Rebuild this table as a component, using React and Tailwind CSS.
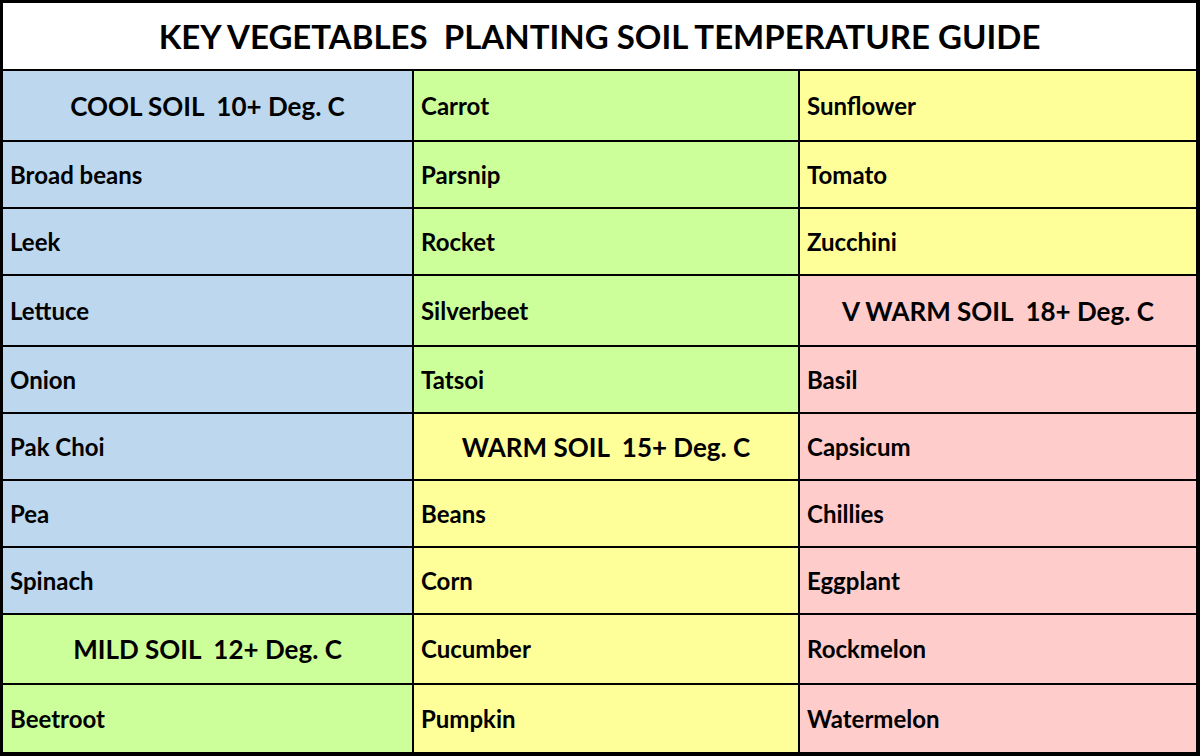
import React from 'react';

const BLUE = 'bg-[#bdd7ee]';
const GREEN = 'bg-[#ccff99]';
const YELLOW = 'bg-[#ffff99]';
const PINK = 'bg-[#ffcccc]';

// each column: [text, colour, isHeader]
const columns = [
  [
    ['COOL SOIL  10+ Deg. C', BLUE, true],
    ['Broad beans', BLUE],
    ['Leek', BLUE],
    ['Lettuce', BLUE],
    ['Onion', BLUE],
    ['Pak Choi', BLUE],
    ['Pea', BLUE],
    ['Spinach', BLUE],
    ['MILD SOIL  12+ Deg. C', GREEN, true],
    ['Beetroot', GREEN],
  ],
  [
    ['Carrot', GREEN],
    ['Parsnip', GREEN],
    ['Rocket', GREEN],
    ['Silverbeet', GREEN],
    ['Tatsoi', GREEN],
    ['WARM SOIL  15+ Deg. C', YELLOW, true],
    ['Beans', YELLOW],
    ['Corn', YELLOW],
    ['Cucumber', YELLOW],
    ['Pumpkin', YELLOW],
  ],
  [
    ['Sunflower', YELLOW],
    ['Tomato', YELLOW],
    ['Zucchini', YELLOW],
    ['V WARM SOIL  18+ Deg. C', PINK, true],
    ['Basil', PINK],
    ['Capsicum', PINK],
    ['Chillies', PINK],
    ['Eggplant', PINK],
    ['Rockmelon', PINK],
    ['Watermelon', PINK],
  ],
];

function Cell({ text, colour, header, col }) {
  return (
    <div
      className={`flex items-center border-t-2 border-black ${colour} ${col > 0 ? 'border-l-2' : ''} ${
        header ? 'justify-center text-[26px]' : 'pl-[7px] text-[24px]'
      }`}
    >
      <span className="whitespace-pre font-bold leading-none text-black">{text}</span>
    </div>
  );
}

export default function App() {
  const rows = [];
  for (let r = 0; r < 10; r++) {
    for (let c = 0; c < 3; c++) {
      const [text, colour, header] = columns[c][r];
      rows.push(<Cell key={`${r}-${c}`} text={text} colour={colour} header={header} col={c} />);
    }
  }

  return (
    <div
      className="w-[1200px] h-[756px] bg-black"
      style={{ fontFamily: 'Lato, "Open Sans", sans-serif' }}
    >
      <div className="w-[1200px] h-[756px] border-t-[3px] border-l-[3px] border-r-4 border-b-4 border-black bg-white flex flex-col">
        <div className="h-[66px] flex items-center justify-center bg-white">
          <h1 className="whitespace-pre text-[33px] font-bold leading-none text-black">
            KEY VEGETABLES  PLANTING SOIL TEMPERATURE GUIDE
          </h1>
        </div>
        <div className="grid grid-cols-[409px_386px_398px] grid-rows-[71px_67px_67px_71px_67px_67px_67px_67px_70px_69px]">
          {rows}
        </div>
      </div>
    </div>
  );
}
